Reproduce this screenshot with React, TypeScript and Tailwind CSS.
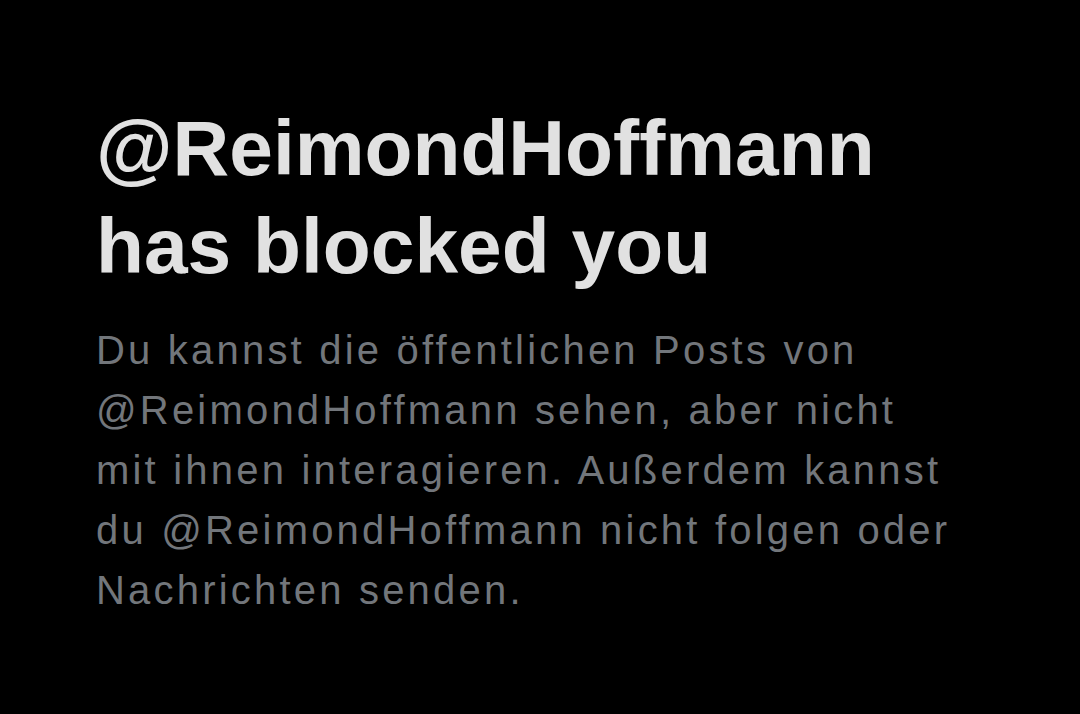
export default function App() {
  return (
    <div className="w-[1080px] h-[714px] bg-black overflow-hidden pl-[96px] pt-[99px]" style={{ fontFamily: '"Liberation Sans", Arial, sans-serif' }}>
      <h1 className="text-[78.5px] leading-[98px] font-bold text-[#e1e1e1]">
        @ReimondHoffmann
        <br />
        has blocked you
      </h1>
      <p className="mt-[25px] text-[40px] leading-[60px] tracking-[3.2px] text-[#72767b] whitespace-nowrap">
        Du kannst die öffentlichen Posts von
        <br />
        @ReimondHoffmann sehen, aber nicht
        <br />
        mit ihnen interagieren. Außerdem kannst
        <br />
        du @ReimondHoffmann nicht folgen oder
        <br />
        Nachrichten senden.
      </p>
    </div>
  );
}
